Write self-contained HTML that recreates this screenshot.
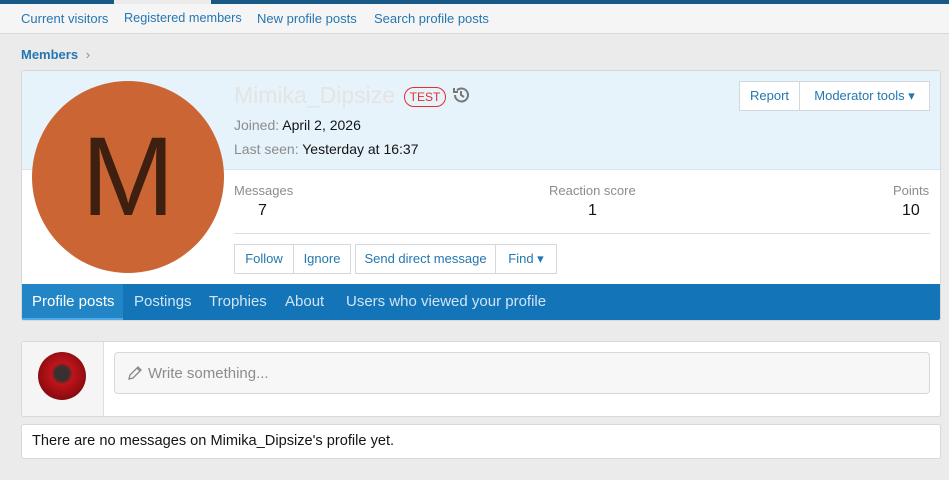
<!DOCTYPE html><html><head><style>
*{box-sizing:border-box}body{margin:0;width:949px;height:480px;background:#ebebeb;font-family:"Liberation Sans",sans-serif;font-size:14px;position:relative;overflow:hidden}
.a{position:absolute}
.lnk{color:#2577b1}
.btn{position:absolute;border:1px solid #d3d8de;background:#fff;color:#2577b1;font-size:13px;height:30px;line-height:28px;text-align:center}
</style></head><body>
<div class="a" style="left:0;top:0;width:114px;height:4px;background:#185886"></div>
<div class="a" style="left:211px;top:0;width:738px;height:4px;background:#185886"></div>
<div class="a" style="left:0;top:4px;width:949px;height:30px;background:#f5f5f5;border-bottom:1px solid #d8d8d8"></div>
<div class="a lnk" style="top:11px;left:21px;font-size:13px">Current visitors</div>
<div class="a lnk" style="top:11px;left:124px;font-size:12.7px">Registered members</div>
<div class="a lnk" style="top:11px;left:257px;font-size:13px">New profile posts</div>
<div class="a lnk" style="top:11px;left:374px;font-size:13px">Search profile posts</div>
<div class="a" style="top:47px;left:21px;font-size:13px;font-weight:bold;color:#2577b1">Members <span style="color:#8c8c8c;font-weight:normal;margin-left:4px">›</span></div>
<div class="a" style="left:21px;top:70px;width:920px;height:251px;background:#fff;border:1px solid #d8d8d8;border-radius:3px;overflow:hidden">
 <div class="a" style="left:0;top:0;width:920px;height:99px;background:#e6f3fb;border-bottom:1px solid #d8e5ee"></div>
 <div class="a" style="left:0;top:213px;width:920px;height:37px;background:#1474b8"></div>
 <div class="a" style="left:0;top:213px;width:101px;height:37px;background:#2286c6;border-bottom:3px solid #4eaaea"></div>
 <div class="a" style="left:10px;top:222px;color:#fff;font-size:15px">Profile posts</div>
 <div class="a" style="left:112px;top:222px;color:#cfe5f7;font-size:15px">Postings</div>
 <div class="a" style="left:187px;top:222px;color:#cfe5f7;font-size:15px">Trophies</div>
 <div class="a" style="left:263px;top:222px;color:#cfe5f7;font-size:15px">About</div>
 <div class="a" style="left:324px;top:222px;color:#cfe5f7;font-size:15px">Users who viewed your profile</div>
</div>
<div class="a" style="left:32px;top:81px;width:192px;height:192px;border-radius:50%;background:#cb6634;color:#3e1f10;font-size:112px;text-align:center;line-height:192px">M</div>
<div class="a" style="left:234px;top:82px;font-size:23px;color:#e4e4e4">Mimika_Dipsize</div>
<div class="a" style="left:404px;top:87px;height:20px;width:42px;border:1px solid #e03030;border-radius:10px;color:#e03030;font-size:12px;text-align:center;line-height:18px">TEST</div>
<svg class="a" style="left:452px;top:86px" width="18" height="18" viewBox="0 0 18 18" fill="none" stroke="#777" stroke-width="2"><path d="M3 9a6.5 6.5 0 1 0 2-4.7"/><path d="M2 2v4h4"/><path d="M9 5v4l3 2"/></svg>
<div class="a" style="left:234px;top:117px;font-size:14px;color:#8c8c8c">Joined: <span style="color:#141414">April 2, 2026</span></div>
<div class="a" style="left:234px;top:141px;font-size:14px;color:#8c8c8c">Last seen: <span style="color:#141414">Yesterday at 16:37</span></div>
<div class="btn" style="left:739px;top:81px;width:61px">Report</div>
<div class="btn" style="left:799px;top:81px;width:131px">Moderator tools ▾</div>
<div class="a" style="left:234px;top:183px;font-size:13px;color:#8c8c8c">Messages</div>
<div class="a" style="left:258px;top:202px;font-size:16px;color:#141414">7</div>
<div class="a" style="left:549px;top:183px;font-size:13px;color:#8c8c8c">Reaction score</div>
<div class="a" style="left:588px;top:202px;font-size:16px;color:#141414">1</div>
<div class="a" style="left:893px;top:183px;font-size:13px;color:#8c8c8c">Points</div>
<div class="a" style="left:902px;top:202px;font-size:16px;color:#141414">10</div>
<div class="a" style="left:234px;top:233px;width:696px;height:1px;background:#dedede"></div>
<div class="btn" style="left:234px;top:244px;width:60px">Follow</div>
<div class="btn" style="left:293px;top:244px;width:58px">Ignore</div>
<div class="btn" style="left:355px;top:244px;width:141px">Send direct message</div>
<div class="btn" style="left:495px;top:244px;width:62px">Find ▾</div>
<div class="a" style="left:21px;top:341px;width:920px;height:76px;background:#fff;border:1px solid #d8d8d8;border-radius:3px;overflow:hidden">
 <div class="a" style="left:0;top:0;width:82px;height:76px;background:#f5f5f5;border-right:1px solid #dedede"></div>
</div>
<div class="a" style="left:38px;top:352px;width:48px;height:48px;border-radius:50%;background:radial-gradient(circle at 50% 45%,#3a3030 0 20%,#c0141a 30%,#8a0c10 70%,#5a2a20)"></div>
<div class="a" style="left:114px;top:352px;width:816px;height:42px;background:#f7f7f7;border:1px solid #d8d8d8;border-radius:4px"></div>
<svg class="a" style="left:127px;top:365px" width="16" height="16" viewBox="0 0 16 16" fill="none" stroke="#888" stroke-width="1.3"><path d="M2 14l1-4 8-8 3 3-8 8z M10 3l3 3"/></svg>
<div class="a" style="left:148px;top:365px;font-size:15px;color:#8c8c8c">Write something...</div>
<div class="a" style="left:21px;top:424px;width:920px;height:35px;background:#fff;border:1px solid #d8d8d8;border-radius:3px"></div>
<div class="a" style="left:32px;top:433px;font-size:14.6px;color:#141414">There are no messages on Mimika_Dipsize's profile yet.</div>
</body></html>
